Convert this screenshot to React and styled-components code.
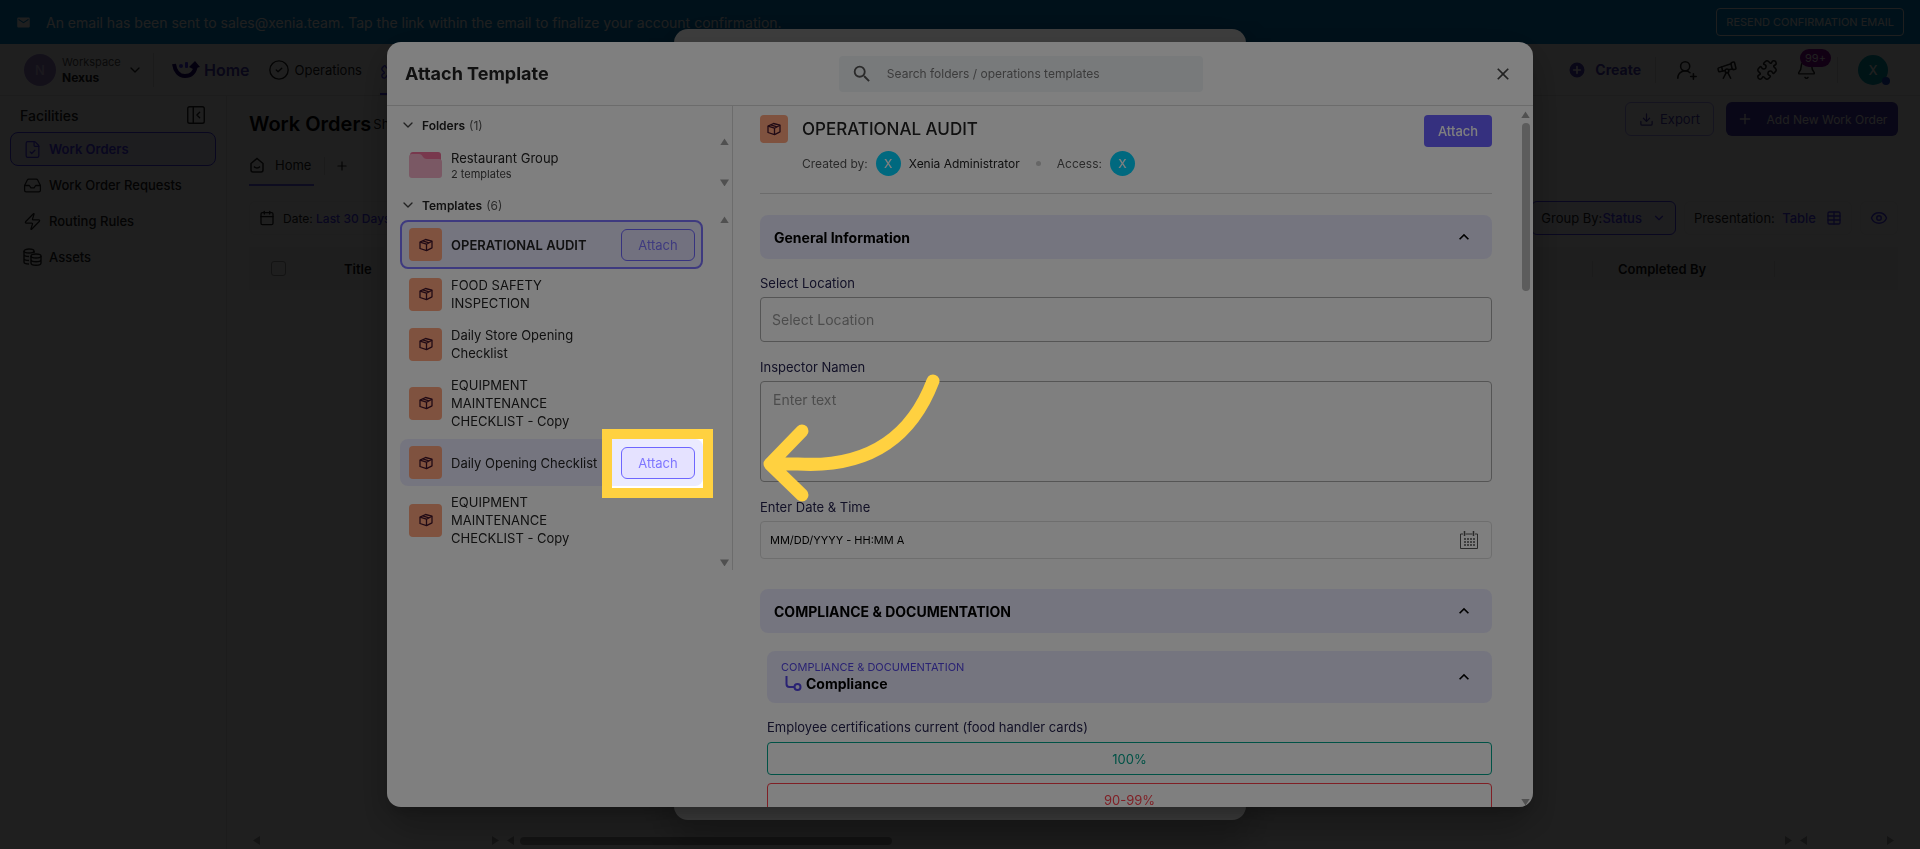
import React from "react";
import styled, { createGlobalStyle, css } from "styled-components";
import {
  ChevronDown,
  CircleCheck,
  CirclePlus,
  Download,
  Eye,
  Inbox,
  PanelLeftClose,
  Plus,
  Puzzle,
  Table,
  Telescope,
  UserRoundPlus,
  Bell,
  Calendar,
  FileCheck,
  Zap,
} from "lucide-react";
import {
  MdEmail,
  MdSearch,
  MdClose,
  MdOutlineKeyboardArrowUp,
} from "react-icons/md";

const templates = [
  { name: "OPERATIONAL AUDIT", state: "selected" },
  { name: "FOOD SAFETY INSPECTION" },
  { name: "Daily Store Opening Checklist" },
  { name: "EQUIPMENT MAINTENANCE CHECKLIST - Copy" },
  { name: "Daily Opening Checklist", state: "hovered" },
  { name: "EQUIPMENT MAINTENANCE CHECKLIST - Copy" },
];

const facilities = [
  { name: "Work Orders", icon: FileCheck, active: true },
  { name: "Work Order Requests", icon: Inbox },
  { name: "Routing Rules", icon: Zap },
  { name: "Assets", icon: CoinsIcon },
];

function CoinsIcon() {
  return (
    <svg
      width="19"
      height="18"
      viewBox="0 0 19 18"
      fill="none"
      stroke="currentColor"
      strokeWidth="1.4"
    >
      <ellipse cx="6" cy="3" rx="5" ry="2" />
      <path d="M1 3v11c0 1 2 2 5 2M11 3v2M1 6.500c0 1 2 2 5 2M1 10.500c0 1 2 2 5 2" />
      <ellipse cx="13" cy="8" rx="5" ry="2" />
      <path d="M8 8v7c0 3 10 3 10 0V8M8 11.500c0 3 10 3 10 0" />
    </svg>
  );
}

function TemplateIcon({ size }) {
  return (
    <IconTile $size={size}>
      <svg
        width="14"
        height="14"
        viewBox="0 0 14 14"
        fill="none"
        stroke="currentColor"
        strokeWidth="1.3"
        strokeLinejoin="round"
      >
        <path d="M1 4.200L6.500 1.500 13 3.200v6.600l-5.500 2.800L1 10.500z" />
        <path d="M1 4.200l6.500 2L13 3.200M7.500 6.200v6.400M3.800 2.900l6.200 1.900" />
      </svg>
    </IconTile>
  );
}

function Page() {
  return (
    <PageWrap>
      <Banner>
        <MdEmail size={15} />
        <p>
          An email has been sent to sales@xenia.team. Tap the link within the
          email to finalize your account confirmation.
        </p>
        <button>RESEND CONFIRMATION EMAIL</button>
      </Banner>

      <TopNav>
        <Workspace>
          <Avatar $size={32} $color="#9c84cf" $text="#d8ccee">
            N
          </Avatar>
          <div>
            <small>Workspace</small>
            <strong>Nexus</strong>
          </div>
          <ChevronDown size={16} />
        </Workspace>
        <Divider $height={34} />
        <HomeLink href="#home">
          <svg width="28" height="18" viewBox="0 0 28 18" fill="none">
            <path
              d="M2 3c1 7 5 12 11 12s10-4 11-11"
              stroke="#1c0070"
              strokeWidth="4"
            />
            <path d="M17 6l6-6 5 6-4 1-3 1z" fill="#1c0070" />
            <circle cx="9" cy="5" r="2" fill="#4a3aff" />
            <rect x="13" y="1" width="3" height="6" rx="1" fill="#4a3aff" />
          </svg>
          Home
        </HomeLink>
        <NavLink href="#operations">
          <CircleCheck size={22} strokeWidth={1.5} />
          Operations
        </NavLink>
        <ActiveTab href="#facilities" aria-label="Facilities">
          <Puzzle size={22} strokeWidth={1.5} />
        </ActiveTab>
        <NavRight>
          <CreateButton>
            <CirclePlus size={20} fill="#4a3ab8" stroke="#fff" />
            Create
          </CreateButton>
          <Divider $height={26} />
          <IconRow>
            <UserRoundPlus size={22} strokeWidth={1.7} />
            <Telescope size={22} strokeWidth={1.7} />
            <Puzzle size={22} strokeWidth={1.7} />
            <BellWrap>
              <Bell size={21} strokeWidth={1.7} />
              <Badge>99+</Badge>
            </BellWrap>
          </IconRow>
          <Divider $height={26} />
          <UserMenu>
            <Avatar $size={30} $color="#00a0b4">
              X
            </Avatar>
            <Presence />
          </UserMenu>
        </NavRight>
      </TopNav>

      <PageBody>
        <Sidebar>
          <SideTitle>
            Facilities
            <PanelLeftClose size={22} strokeWidth={1.5} />
          </SideTitle>
          {facilities.map((item) => (
            <SideLink key={item.name} href="#" $active={item.active}>
              <item.icon size={19} strokeWidth={1.6} />
              {item.name}
            </SideLink>
          ))}
        </Sidebar>

        <Content>
          <TitleRow>
            <h1>Work Orders</h1>
            <span>Sh</span>
            <ButtonGroup>
              <ExportButton>
                <Download size={15} />
                Export
              </ExportButton>
              <AddButton>
                <Plus size={16} />
                Add New Work Order
              </AddButton>
            </ButtonGroup>
          </TitleRow>
          <Tabs>
            <HomeTab href="#tab">
              <svg
                width="16"
                height="16"
                viewBox="0 0 16 16"
                fill="none"
                stroke="currentColor"
                strokeWidth="1.5"
              >
                <path d="M2 6.500L8 1.500l6 5V13a2 2 0 0 1-2 2H4a2 2 0 0 1-2-2z" />
                <path d="M5 9.500c1.500 2 4.500 2 6 0" />
              </svg>
              Home
            </HomeTab>
            <Divider $height={18} />
            <Plus size={14} />
          </Tabs>
          <Filters>
            <Filter $small>
              <Calendar size={16} />
              <span>
                Date: <b>Last 30 Days</b>
              </span>
            </Filter>
            <FilterGroup>
              <Filter $active>
                <span>
                  Group By:<b>Status</b>
                </span>
                <ChevronDown size={14} color="#4a3aff" />
              </Filter>
              <Filter>
                <span>
                  Presentation: &nbsp;<b>Table</b>
                </span>
                <Table size={16} color="#4a3aff" />
              </Filter>
              <Filter>
                <Eye size={18} color="#4a3aff" />
              </Filter>
            </FilterGroup>
          </Filters>
          <OrdersTable>
            <thead>
              <tr>
                <CheckCell>
                  <input type="checkbox" aria-label="Select all" />
                </CheckCell>
                <th>Title</th>
                <LastCell>
                  <span>Completed By</span>
                </LastCell>
              </tr>
            </thead>
          </OrdersTable>
          <ScrollTrack>
            <Arrow $dir="left" />
            <ArrowPair>
              <Arrow $dir="right" />
              <Arrow $dir="left" />
            </ArrowPair>
            <ScrollThumb />
            <ArrowEnd>
              <Arrow $dir="right" />
              <Arrow $dir="left" />
            </ArrowEnd>
            <ArrowLast>
              <Arrow $dir="right" />
            </ArrowLast>
          </ScrollTrack>
        </Content>
      </PageBody>
    </PageWrap>
  );
}

function TemplateList() {
  return (
    <ListPane>
      <ListHeading>
        <ChevronDown size={16} />
        <b>Folders</b> (1)
      </ListHeading>
      <FolderRow>
        <svg width="33" height="28" viewBox="0 0 33 28">
          <path d="M1 4a3 3 0 0 1 3-3h25a3 3 0 0 1 3 3v12H1z" fill="#f0709a" />
          <path
            d="M0 6a3 3 0 0 1 3-3h7c2 0 3 1 4 3 1 1 2 2 4 2h12a3 3 0 0 1 3 3v13a3 3 0 0 1-3 3H3a3 3 0 0 1-3-3z"
            fill="#f4b0c8"
          />
        </svg>
        <div>
          <span>Restaurant Group</span>
          <small>2 templates</small>
        </div>
        <ListScroll>
          <Arrow $dir="up" />
          <Arrow $dir="down" />
        </ListScroll>
      </FolderRow>
      <ListHeading>
        <ChevronDown size={16} />
        <b>Templates</b> (6)
      </ListHeading>
      <TemplatesWrap>
        <Templates>
          {templates.map((t, i) => (
            <TemplateRow key={i} $state={t.state}>
              <TemplateIcon size={33} />
              <TemplateName $bold={t.state === "selected"} $wide={t.state}>
                {t.name}
              </TemplateName>
              {t.state && <OutlineButton>Attach</OutlineButton>}
            </TemplateRow>
          ))}
        </Templates>
        <ListScroll>
          <Arrow $dir="up" />
          <Arrow $dir="down" />
        </ListScroll>
      </TemplatesWrap>
    </ListPane>
  );
}

function TemplatePreview() {
  return (
    <PreviewPane>
      <Preview>
        <PreviewHeader>
          <TemplateIcon size={28} />
          <div>
            <h3>OPERATIONAL AUDIT</h3>
            <Meta>
              <span>Created by:</span>
              <Avatar $size={25} $color="#00d2ff">
                X
              </Avatar>
              <strong>Xenia Administrator</strong>
              <Dot />
              <span>Access:</span>
              <Avatar $size={25} $color="#00d2ff">
                X
              </Avatar>
            </Meta>
          </div>
          <PrimaryButton>Attach</PrimaryButton>
        </PreviewHeader>

        <Section>
          General Information
          <MdOutlineKeyboardArrowUp size={20} />
        </Section>

        <Field>
          <label htmlFor="location">Select Location</label>
          <TextInput id="location" placeholder="Select Location" />
        </Field>
        <Field>
          <label htmlFor="inspector">Inspector Namen</label>
          <TextArea id="inspector" placeholder="Enter text" />
        </Field>
        <Field>
          <label htmlFor="datetime">Enter Date &amp; Time</label>
          <DateBox>
            <input id="datetime" defaultValue="MM/DD/YYYY - HH:MM A" />
            <svg
              width="18"
              height="18"
              viewBox="0 0 18 18"
              fill="none"
              stroke="#555"
            >
              <path d="M3 3H.5v14.500h17V3H15M5.500 3h7" />
              <path d="M4.500 0v5M13.500 0v5" strokeWidth="1.500" />
              <path
                d="M4 8h11M4 11h11M4 14h11"
                strokeWidth="1.500"
                strokeDasharray="2 1"
              />
            </svg>
          </DateBox>
        </Field>

        <Section>
          COMPLIANCE &amp; DOCUMENTATION
          <MdOutlineKeyboardArrowUp size={20} />
        </Section>

        <SubSectionWrap>
          <Section $nested>
            <div>
              <small>COMPLIANCE &amp; DOCUMENTATION</small>
              <SubTitle>
                <svg
                  width="17"
                  height="16"
                  viewBox="0 0 17 16"
                  fill="none"
                  stroke="#5344e6"
                  strokeWidth="2"
                >
                  <path d="M1.500 0v8a3 3 0 0 0 3 3H9" />
                  <circle cx="12.500" cy="11" r="3" />
                </svg>
                Compliance
              </SubTitle>
            </div>
            <MdOutlineKeyboardArrowUp size={20} />
          </Section>
          <Question>Employee certifications current (food handler cards)</Question>
          <Answer $color="#00a48c">100%</Answer>
          <Answer $color="#ff3f4a">90-99%</Answer>
        </SubSectionWrap>
      </Preview>
      <PreviewScroll>
        <Arrow $dir="up" />
        <span />
        <Arrow $dir="down" />
      </PreviewScroll>
    </PreviewPane>
  );
}

export default function App() {
  return (
    <>
      <GlobalStyle />
      <Page />
      <Backdrop>
        <BackDialog />
      </Backdrop>
      <Backdrop>
        <Dialog role="dialog" aria-label="Attach Template">
          <DialogHeader>
            <h2>Attach Template</h2>
            <SearchBox>
              <MdSearch size={22} />
              <input
                aria-label="Search templates"
                placeholder="Search folders / operations templates"
              />
            </SearchBox>
            <CloseButton aria-label="Close">
              <MdClose size={20} />
            </CloseButton>
          </DialogHeader>
          <DialogBody>
            <TemplateList />
            <TemplatePreview />
          </DialogBody>
        </Dialog>
      </Backdrop>
      <Spotlight />
      <Pointer viewBox="0 0 180 132" width="180" height="132">
        <path d="M170 10Q136 99 35 93H7M39 60L7 93l32 31" />
      </Pointer>
    </>
  );
}

const GlobalStyle = createGlobalStyle`
  * {
    box-sizing: border-box;
  }

  body {
    margin: 0;
    overflow: hidden;
    font-family: Inter, "Liberation Sans", sans-serif;
    font-size: 13px;
    color: #222;
  }

  button,
  input,
  textarea {
    font-family: inherit;
    font-size: inherit;
  }

  h1, h2, h3, p {
    margin: 0;
  }

  a {
    color: inherit;
    text-decoration: none;
  }

  svg {
    flex-shrink: 0;
  }
`;

const center = css`
  display: flex;
  align-items: center;
  justify-content: center;
`;

/* page behind the dialogs */

const PageWrap = styled.div`
  display: flex;
  flex-direction: column;
  height: 100vh;
  background: #fff;
`;

const Banner = styled.div`
  display: flex;
  align-items: center;
  gap: 15px;
  height: 44px;
  flex-shrink: 0;
  padding: 0 16px;
  background: #0288d1;
  color: #fff;
  font-size: 14px;

  button {
    margin-left: auto;
    height: 28px;
    padding: 0 9px;
    background: none;
    border: 1px solid #fff;
    border-radius: 4px;
    color: #fff;
    font-size: 11px;
  }
`;

const TopNav = styled.nav`
  display: flex;
  align-items: center;
  height: 52px;
  flex-shrink: 0;
  padding: 0 32px 0 24px;
  border-bottom: 1px solid #e0e0e0;
`;

const Workspace = styled.div`
  display: flex;
  align-items: center;
  gap: 6px;
  width: 129px;

  small,
  strong {
    display: block;
    font-size: 12px;
    line-height: 16px;
  }

  small {
    font-size: 11px;
    color: #555;
  }

  svg {
    margin-left: auto;
    margin-right: 17px;
  }
`;

const Avatar = styled.span`
  ${center}
  width: ${(p) => p.$size}px;
  height: ${(p) => p.$size}px;
  flex-shrink: 0;
  border-radius: 50%;
  background: ${(p) => p.$color};
  color: ${(p) => p.$text || "#fff"};
  font-weight: 500;
`;

const Divider = styled.span`
  width: 1px;
  height: ${(p) => p.$height}px;
  background: #d8d8d8;
`;

const HomeLink = styled.a`
  display: flex;
  align-items: center;
  gap: 4px;
  margin-left: 18px;
  color: #4a3ab8;
  font-size: 16px;
  font-weight: 600;
`;

const NavLink = styled.a`
  display: flex;
  align-items: center;
  gap: 5px;
  margin-left: 18px;
`;

const ActiveTab = styled.a`
  display: flex;
  align-items: center;
  align-self: stretch;
  margin-left: 18px;
  padding-right: 80px;
  border-bottom: 2px solid #4a3aff;
  color: #4a3aff;
`;

const NavRight = styled.div`
  display: flex;
  align-items: center;
  margin-left: auto;
  gap: 14px;
`;

const CreateButton = styled.button`
  display: flex;
  align-items: center;
  gap: 8px;
  padding: 0;
  background: none;
  border: 0;
  color: #4a3ab8;
  font-size: 14px;
  font-weight: 700;
`;

const IconRow = styled.div`
  display: flex;
  align-items: center;
  gap: 18px;
  margin: 0 6px;
`;

const BellWrap = styled.div`
  position: relative;
  display: flex;
`;

const UserMenu = styled(BellWrap)`
  margin-left: 6px;
`;

const Badge = styled.span`
  ${center}
  position: absolute;
  left: 4px;
  top: -10px;
  width: 31px;
  height: 18px;
  border-radius: 9px;
  background: #8a009c;
  color: #fff;
  font-size: 11px;
`;

const Presence = styled.span`
  position: absolute;
  right: -2px;
  bottom: 0;
  width: 8px;
  height: 8px;
  border-radius: 50%;
  background: #1a4ad0;
`;

const PageBody = styled.div`
  display: flex;
  flex: 1;
  min-height: 0;
`;

const Sidebar = styled.aside`
  width: 227px;
  flex-shrink: 0;
  padding: 8px 10px;
  border-right: 1px solid #e0e0e0;
`;

const SideTitle = styled.div`
  display: flex;
  align-items: center;
  justify-content: space-between;
  padding: 0 9px 6px 10px;
  font-size: 14px;
  font-weight: 500;
`;

const SideLink = styled.a`
  display: flex;
  align-items: center;
  gap: 7px;
  height: 34px;
  margin-bottom: 2px;
  padding: 0 12px;
  border: 1px solid ${(p) => (p.$active ? "#4a3aff" : "transparent")};
  border-radius: 8px;
  background: ${(p) => (p.$active ? "#ecebff" : "none")};
  color: ${(p) => (p.$active ? "#4a3aff" : "inherit")};
  font-weight: ${(p) => (p.$active ? 600 : 500)};
`;

const Content = styled.main`
  display: flex;
  flex-direction: column;
  flex: 1;
  min-width: 0;
  padding: 6px 22px 4px;
`;

const TitleRow = styled.div`
  display: flex;
  align-items: center;
  gap: 2px;
  height: 34px;

  h1 {
    font-size: 20px;
    font-weight: 600;
    color: #000;
    line-height: 40px;
    padding-top: 10px;
  }

  > span {
    padding-top: 10px;
  }
`;

const ButtonGroup = styled.div`
  display: flex;
  gap: 12px;
  margin-left: auto;
`;

const ExportButton = styled.button`
  ${center}
  gap: 6px;
  width: 89px;
  height: 34px;
  border: 1px solid #a9a2ff;
  border-radius: 6px;
  background: none;
  color: #4a3ab8;
`;

const AddButton = styled.button`
  ${center}
  gap: 14px;
  width: 172px;
  height: 34px;
  border: 0;
  border-radius: 6px;
  background: #4a3ab8;
  color: #fff;
  font-size: 12px;
`;

const Tabs = styled.div`
  display: flex;
  align-items: center;
  gap: 10px;
  height: 40px;
  margin-top: 10px;
`;

const HomeTab = styled.a`
  display: flex;
  align-items: center;
  gap: 10px;
  height: 40px;
  padding-right: 3px;
  border-bottom: 2px solid #6f63ff;
`;

const Filters = styled.div`
  display: flex;
  justify-content: space-between;
  margin-top: 15px;
`;

const FilterGroup = styled.div`
  display: flex;
  gap: 8px;
`;

const Filter = styled.div`
  display: flex;
  align-items: center;
  gap: ${(p) => (p.$small ? 8 : 10)}px;
  height: 34px;
  padding: 0 9px;
  border: 1px solid ${(p) => (p.$active ? "#4a3aff" : "#f0f0f0")};
  border-radius: 6px;
  background: ${(p) => (p.$active ? "#f3f2ff" : "none")};
  font-size: ${(p) => (p.$small ? 12 : 13)}px;

  b {
    font-weight: 500;
    color: #4a3aff;
  }
`;

const OrdersTable = styled.table`
  width: 100%;
  height: 43px;
  margin-top: 12px;
  border-collapse: collapse;
  background: #f7f7f7;
  color: #111;

  th {
    font-weight: 600;
    text-align: left;
  }
`;

const CheckCell = styled.th`
  width: 94px;
  padding-left: 22px;

  input {
    display: block;
    width: 15px;
    height: 15px;
    margin: 0;
    appearance: none;
    border: 1px solid #999;
    border-radius: 3px;
  }
`;

const LastCell = styled.th`
  width: 306px;
  padding: 0;

  span {
    display: block;
    width: 183px;
    padding-left: 25px;
    border-left: 1px solid #ddd;
    border-right: 1px solid #ddd;
  }
`;

const ScrollTrack = styled.div`
  display: flex;
  align-items: center;
  margin-top: auto;
  padding-left: 4px;
`;

const arrows = {
  up: "polygon(50% 0, 100% 100%, 0 100%)",
  down: "polygon(0 0, 100% 0, 50% 100%)",
  left: "polygon(0 50%, 100% 0, 100% 100%)",
  right: "polygon(0 0, 100% 50%, 0 100%)",
};

const isSideways = (p) => p.$dir === "left" || p.$dir === "right";

const Arrow = styled.i`
  display: block;
  width: ${(p) => (isSideways(p) ? 7 : 9)}px;
  height: ${(p) => (isSideways(p) ? 9 : 7)}px;
  background: #a0a0a0;
  clip-path: ${(p) => arrows[p.$dir]};
`;

const ArrowPair = styled.div`
  display: flex;
  gap: 8px;
  margin-left: 232px;
`;

const ScrollThumb = styled.div`
  width: 372px;
  height: 8px;
  margin-left: 6px;
  border-radius: 4px;
  background: #a0a0a0;
`;

const ArrowEnd = styled(ArrowPair)`
  margin-left: auto;
`;

const ArrowLast = styled.div`
  margin: 0 4px 0 80px;
`;

/* dialogs */

const Backdrop = styled.div`
  ${center}
  position: fixed;
  inset: 0;
  background: rgba(0, 0, 0, 0.5);
`;

const BackDialog = styled.div`
  width: 572px;
  height: calc(100vh - 58px);
  border-radius: 14px;
  background: #fff;
  box-shadow: 0 24px 38px 3px rgba(0, 0, 0, 0.14),
    0 9px 46px 8px rgba(0, 0, 0, 0.12);
`;

const Dialog = styled.div`
  display: flex;
  flex-direction: column;
  width: 1146px;
  max-width: 95vw;
  height: 90vh;
  overflow: hidden;
  border-radius: 14px;
  background: #fff;
  box-shadow: 0 11px 15px -7px rgba(0, 0, 0, 0.2),
    0 24px 38px 3px rgba(0, 0, 0, 0.14), 0 9px 46px 8px rgba(0, 0, 0, 0.12);
`;

const DialogHeader = styled.header`
  display: flex;
  align-items: center;
  justify-content: space-between;
  height: 64px;
  flex-shrink: 0;
  padding: 0 20px 0 18px;
  border-bottom: 1px solid #d8d8d8;

  h2 {
    font-size: 18px;
    font-weight: 700;
  }
`;

const SearchBox = styled.div`
  display: flex;
  align-items: center;
  gap: 12px;
  width: 364px;
  height: 36px;
  padding: 0 12px;
  border-radius: 4px;
  background: #f1f4f7;
  color: #555;

  input {
    flex: 1;
    border: 0;
    outline: 0;
    background: none;
    font-size: 12px;
  }

  input::placeholder {
    color: #777;
  }
`;

const CloseButton = styled.button`
  display: flex;
  padding: 0;
  border: 0;
  background: none;
  color: #444;
`;

const DialogBody = styled.div`
  display: flex;
  flex: 1;
  min-height: 0;
`;

const ListPane = styled.div`
  width: 346px;
  height: 464px;
  flex-shrink: 0;
  padding: 8px 0 0 13px;
  border-right: 1px solid #d8d8d8;
`;

const ListHeading = styled.div`
  display: flex;
  align-items: center;
  gap: 4px;
  height: 22px;
  font-size: 12px;
  color: #555;

  b {
    margin-left: 2px;
    font-weight: 600;
    color: #222;
  }

  svg {
    color: #444;
  }
`;

const FolderRow = styled.div`
  display: flex;
  align-items: center;
  gap: 9px;
  height: 58px;
  padding-left: 9px;

  span,
  small {
    display: block;
    line-height: 18px;
  }

  small {
    font-size: 11px;
    line-height: 14px;
    color: #444;
  }
`;

const ListScroll = styled.div`
  display: flex;
  flex-direction: column;
  justify-content: space-between;
  align-self: stretch;
  margin-left: auto;
  padding: 2px 3px 8px 0;
`;

const TemplatesWrap = styled.div`
  display: flex;
  height: 350px;
  padding-top: 4px;

  ${ListScroll} {
    margin-top: -4px;
    padding: 0 3px 0 0;
  }
`;

const Templates = styled.div`
  width: 303px;
`;

const TemplateRow = styled.div`
  display: flex;
  align-items: center;
  gap: 9px;
  min-height: ${(p) => (p.$state === "hovered" ? 47 : 49)}px;
  margin-top: ${(p) => (p.$state === "hovered" ? 2 : 0)}px;
  padding: ${(p) => (p.$state ? 0 : 5)}px 6px ${(p) => (p.$state ? 0 : 5)}px 7px;
  border: 2px solid
    ${(p) => (p.$state === "selected" ? "#7c74ff" : "transparent")};
  border-radius: 8px;
  background: ${(p) => (p.$state ? "#ebebff" : "none")};
  line-height: 18px;
`;

const TemplateName = styled.span`
  flex: 1;
  max-width: ${(p) => (p.$wide ? "none" : "140px")};
  font-size: 13px;
  font-weight: ${(p) => (p.$bold ? 600 : 400)};
  white-space: ${(p) => (p.$wide ? "nowrap" : "normal")};
`;

const IconTile = styled.span`
  ${center}
  width: ${(p) => p.$size}px;
  height: ${(p) => p.$size}px;
  flex-shrink: 0;
  border-radius: 4px;
  background: #ffa47e;
  color: #41142a;
`;

const OutlineButton = styled.button`
  width: 74px;
  height: 32px;
  border: 1px solid #6e66ff;
  border-radius: 6px;
  background: #e5e2ff;
  color: #7e76ff;
`;

const PreviewPane = styled.div`
  display: flex;
  flex: 1;
  min-width: 0;
`;

const Preview = styled.div`
  flex: 1;
  min-width: 0;
  overflow: hidden;
  padding: 8px 26px 0 27px;
`;

const PreviewHeader = styled.div`
  display: flex;
  gap: 14px;
  height: 80px;
  margin-bottom: 21px;
  padding-top: 1px;
  border-bottom: 1px solid #d8d8d8;

  h3 {
    font-size: 17px;
    font-weight: 500;
    line-height: 28px;
  }
`;

const Meta = styled.div`
  display: flex;
  align-items: center;
  gap: 8px;
  margin-top: 8px;
  font-size: 12px;
  color: #555;

  strong {
    font-weight: 400;
    color: #222;
  }
`;

const Dot = styled.i`
  width: 5px;
  height: 5px;
  margin: 0 8px;
  border-radius: 50%;
  background: #ccc;
`;

const PrimaryButton = styled.button`
  width: 68px;
  height: 32px;
  margin-left: auto;
  border: 0;
  border-radius: 4px;
  background: #6a61ff;
  color: #fff;
  font-weight: 500;
`;

const Section = styled.div`
  display: flex;
  align-items: center;
  justify-content: space-between;
  height: ${(p) => (p.$nested ? 52 : 44)}px;
  margin-bottom: 15px;
  padding: 0 18px 0 14px;
  border-radius: 8px;
  background: #ebebff;
  color: #000;
  font-size: 14px;
  font-weight: 700;

  small {
    display: block;
    font-size: 11px;
    font-weight: 400;
    line-height: 14px;
    color: #5344e6;
  }
`;

const Field = styled.div`
  display: flex;
  flex-direction: column;
  margin-bottom: 16px;

  label {
    margin-bottom: 5px;
    line-height: 18px;
    color: #25224e;
  }
`;

const inputBase = css`
  width: 100%;
  border: 1px solid #aaa;
  border-radius: 4px;
  background: #fff;
  outline: 0;

  &::placeholder {
    color: #999;
  }
`;

const TextInput = styled.input`
  ${inputBase}
  height: 45px;
  padding: 0 11px;
  font-size: 14px;
`;

const TextArea = styled.textarea`
  ${inputBase}
  display: block;
  height: 101px;
  padding: 9px 12px;
  font-size: 14px;
  resize: none;
`;

const DateBox = styled.div`
  display: flex;
  align-items: center;
  height: 38px;
  margin-bottom: 14px;
  padding: 0 13px 0 9px;
  border: 1px solid #ddd;
  border-radius: 4px;

  input {
    flex: 1;
    padding: 0;
    border: 0;
    outline: 0;
    background: none;
    color: #000;
    font-size: 11px;
  }
`;

const SubSectionWrap = styled.div`
  padding: 3px 0 0 7px;
`;

const SubTitle = styled.div`
  display: flex;
  align-items: center;
  gap: 4px;
  padding-left: 4px;
  line-height: 20px;
`;

const Question = styled.p`
  margin-bottom: 6px;
  line-height: 18px;
  color: #25224e;
`;

const Answer = styled.button`
  display: block;
  width: 100%;
  height: 33px;
  margin-bottom: 8px;
  border: 1px solid ${(p) => p.$color};
  border-radius: 4px;
  background: #fff;
  color: ${(p) => p.$color};
`;

const PreviewScroll = styled.div`
  display: flex;
  flex-direction: column;
  align-items: center;
  gap: 5px;
  width: 15px;
  padding: 5px 0 1px;

  span {
    width: 8px;
    height: 168px;
    border-radius: 4px;
    background: #b8b8b8;
  }

  ${Arrow}:last-child {
    margin-top: auto;
  }
`;

/* guide marker drawn on top of everything */

const Spotlight = styled.div`
  position: fixed;
  left: calc(50% - 358px);
  top: calc(50% + 4px);
  width: 111px;
  height: 69px;
  border: 10px solid #ffd140;
  box-shadow: 0 0 0 100vmax rgba(0, 0, 0, 0.5);
`;

const Pointer = styled.svg`
  position: fixed;
  left: calc(50% - 197px);
  top: calc(50% - 54px);
  fill: none;
  stroke: #ffd140;
  stroke-width: 13px;
  stroke-linecap: round;
  stroke-linejoin: round;
`;
